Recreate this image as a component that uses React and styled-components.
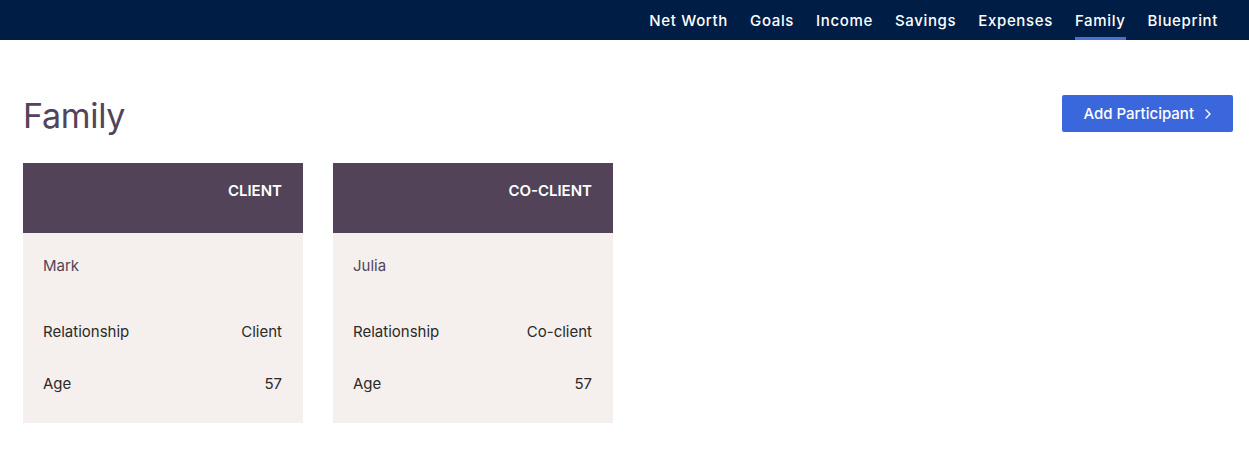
import * as React from "react"
import styled, { createGlobalStyle } from "styled-components"

const GlobalStyle = createGlobalStyle`
  body {
    margin: 0;
    background: #ffffff;
    font-family: Inter, "Open Sans", sans-serif;
  }
`

const navLinks = ["Net Worth", "Goals", "Income", "Savings", "Expenses", "Family", "Blueprint"]

const participants = [
  { role: "CLIENT", name: "Mark", relationship: "Client", age: 57 },
  { role: "CO-CLIENT", name: "Julia", relationship: "Co-client", age: 57 },
]

const TopBar = styled.nav`
  height: 40px;
  background: #001e45;
  display: flex;
  justify-content: flex-end;
  padding-right: 31px;
`
const NavList = styled.ul`
  display: flex;
  gap: 22px;
  margin: 0;
  padding: 0;
  list-style: none;
`
const NavItem = styled.li`
  display: flex;
  align-items: center;
  height: 40px;
  box-sizing: border-box;
  color: #ffffff;
  font-size: 15px;
  font-weight: 500;
  letter-spacing: 0.65px;
  border-bottom: 3px solid ${props => (props.active ? "#4a6fd6" : "transparent")};
  padding-top: 3px;
`
const Main = styled.main`
  padding: 55px 16px 0 23px;
`
const Header = styled.header`
  display: flex;
  justify-content: space-between;
  align-items: flex-start;
`
const Title = styled.h1`
  margin: 0;
  font-size: 34px;
  font-weight: 400;
  color: #52445a;
  letter-spacing: -0.3px;
`
const AddButton = styled.button`
  display: flex;
  align-items: center;
  gap: 10px;
  height: 37px;
  padding: 0 21px;
  background: #3b67dc;
  color: #ffffff;
  border: none;
  border-radius: 2px;
  font-family: inherit;
  font-size: 15px;
  font-weight: 500;
`
const Cards = styled.section`
  display: flex;
  gap: 30px;
  margin-top: 27px;
`
const Card = styled.article`
  width: 280px;
  background: #f5f0ed;
`
const CardHead = styled.div`
  height: 70px;
  background: #524359;
  color: #ffffff;
  display: flex;
  justify-content: flex-end;
  align-items: flex-start;
  padding: 18px 21px 0;
  box-sizing: border-box;
  font-size: 15px;
  font-weight: 600;
`
const CardBody = styled.div`
  padding: 23px 21px 30px 20px;
  font-size: 15px;
`
const Name = styled.div`
  color: #52445a;
  margin-bottom: 47px;
`
const Row = styled.div`
  display: flex;
  justify-content: space-between;
  color: #2a2a2a;
  & + & {
    margin-top: 33px;
  }
`

const Chevron = () => (
  <svg width="8" height="12" viewBox="0 0 8 12" fill="none">
    <path d="M2 2l4 4-4 4" stroke="#fff" strokeWidth="1.4" strokeLinecap="round" strokeLinejoin="round" />
  </svg>
)

const App = () => (
  <>
    <GlobalStyle />
    <TopBar>
      <NavList>
        {navLinks.map(title => (
          <NavItem key={title} active={title === "Family"}>
            {title}
          </NavItem>
        ))}
      </NavList>
    </TopBar>
    <Main>
      <Header>
        <Title>Family</Title>
        <AddButton>
          Add Participant <Chevron />
        </AddButton>
      </Header>
      <Cards>
        {participants.map(p => (
          <Card key={p.role}>
            <CardHead>{p.role}</CardHead>
            <CardBody>
              <Name>{p.name}</Name>
              <Row>
                <span>Relationship</span>
                <span>{p.relationship}</span>
              </Row>
              <Row>
                <span>Age</span>
                <span>{p.age}</span>
              </Row>
            </CardBody>
          </Card>
        ))}
      </Cards>
    </Main>
  </>
)

export default App
